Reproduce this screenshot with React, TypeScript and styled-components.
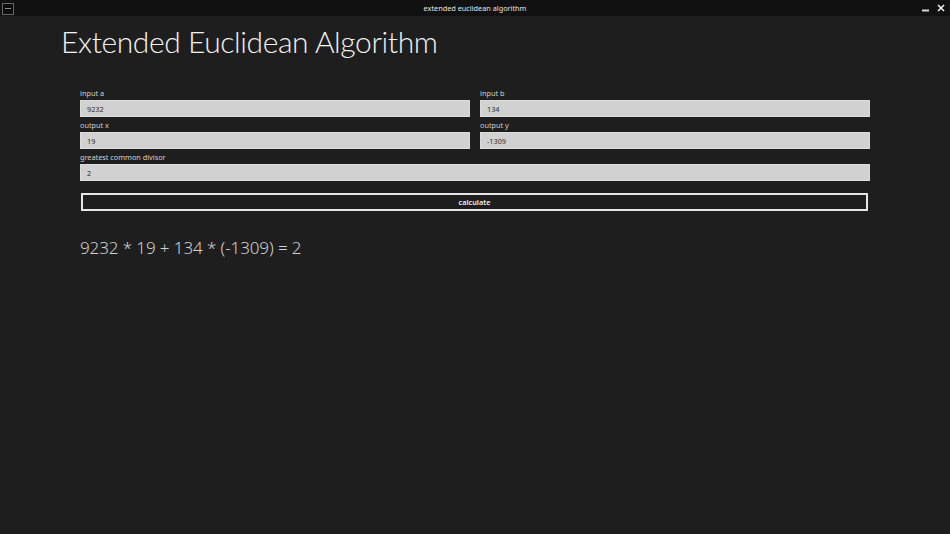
import React from "react";
import styled, { createGlobalStyle } from "styled-components";

const GlobalStyle = createGlobalStyle`
  html, body {
    margin: 0;
    height: 100%;
    background: #1e1e1e;
    overflow: hidden;
  }
  body {
    font-family: "Noto Sans", "Open Sans", sans-serif;
  }
`;

const Page = styled.div`
  width: 950px;
  height: 534px;
  display: flex;
  flex-direction: column;
  background: #1e1e1e;
  color: #d6d6d6;
`;

const TitleBar = styled.header`
  height: 16px;
  flex: none;
  display: grid;
  grid-template-columns: 1fr auto 1fr;
  align-items: center;
  background: #111111;
`;

const AppIcon = styled.div`
  width: 12px;
  height: 12px;
  margin: 1px 0 0 2px;
  box-sizing: border-box;
  border: 1px solid #666666;
  background: #0c0c0c;
  display: flex;
  align-items: center;
  justify-content: center;
  &::after {
    content: "";
    width: 6px;
    height: 1px;
    background: #8a8a8a;
  }
`;

const WindowTitle = styled.div`
  font-size: 7.3px;
  color: #e4e4e4;
  line-height: 16px;
`;

const WindowButtons = styled.div`
  display: flex;
  justify-content: flex-end;
  align-items: center;
  gap: 8px;
  padding-right: 5px;
  svg {
    display: block;
  }
`;

const Content = styled.main`
  padding: 5px 80px 0;
  display: flex;
  flex-direction: column;
`;

const Heading = styled.h1`
  margin: 0 0 0 -19px;
  font-family: Lato, "Open Sans", sans-serif;
  font-size: 30px;
  font-weight: 300;
  letter-spacing: -0.4px;
  line-height: 40px;
  color: #f2f2f2;
  white-space: nowrap;
`;

const Form = styled.form`
  margin-top: 24px;
  display: grid;
  grid-template-columns: 390px 390px;
  column-gap: 10px;
`;

const Field = styled.label<{ $wide?: boolean }>`
  display: block;
  grid-column: ${(p) => (p.$wide ? "1 / -1" : "auto")};
`;

const FieldLabel = styled.span`
  display: block;
  height: 15px;
  font-size: 7.3px;
  line-height: 16px;
  color: #d0d0d0;
`;

const Input = styled.input`
  display: block;
  width: 100%;
  height: 17px;
  box-sizing: border-box;
  padding: 0 6px;
  border: 1px solid #dcdcdc;
  outline: 0;
  border-radius: 0;
  background: #d1d1d1;
  color: #2c2c2c;
  font-family: inherit;
  font-size: 7.3px;
`;

const CalcButton = styled.button`
  grid-column: 1 / -1;
  margin: 12px 2px 0 1px;
  height: 18px;
  box-sizing: border-box;
  border: 2px solid #e6e6e6;
  border-radius: 0;
  background: transparent;
  color: #f0f0f0;
  font-family: inherit;
  font-size: 7.3px;
  font-weight: 600;
  padding: 0;
`;

const Result = styled.p`
  margin: 25px 0 0;
  font-size: 17px;
  letter-spacing: -0.1px;
  line-height: 24px;
  font-weight: 300;
  color: #d0d0d0;
`;

const fields = [
  { label: "input a", value: "9232" },
  { label: "input b", value: "134" },
  { label: "output x", value: "19" },
  { label: "output y", value: "-1309" },
  { label: "greatest common divisor", value: "2", wide: true },
];

export default function App() {
  return (
    <Page>
      <GlobalStyle />
      <TitleBar>
        <AppIcon />
        <WindowTitle>extended euclidean algorithm</WindowTitle>
        <WindowButtons>
          <svg width="7" height="8" viewBox="0 0 7 8">
            <rect y="5.5" width="7" height="2" fill="#d8d8d8" />
          </svg>
          <svg width="8" height="8" viewBox="0 0 8 8">
            <path d="M1 1 L7 7 M7 1 L1 7" stroke="#f0f0f0" strokeWidth="1.6" />
          </svg>
        </WindowButtons>
      </TitleBar>
      <Content>
        <Heading>Extended Euclidean Algorithm</Heading>
        <Form>
          {fields.map((f) => (
            <Field key={f.label} $wide={f.wide}>
              <FieldLabel>{f.label}</FieldLabel>
              <Input readOnly value={f.value} />
            </Field>
          ))}
          <CalcButton type="button">calculate</CalcButton>
        </Form>
        <Result>9232 * 19 + 134 * (-1309) = 2</Result>
      </Content>
    </Page>
  );
}
